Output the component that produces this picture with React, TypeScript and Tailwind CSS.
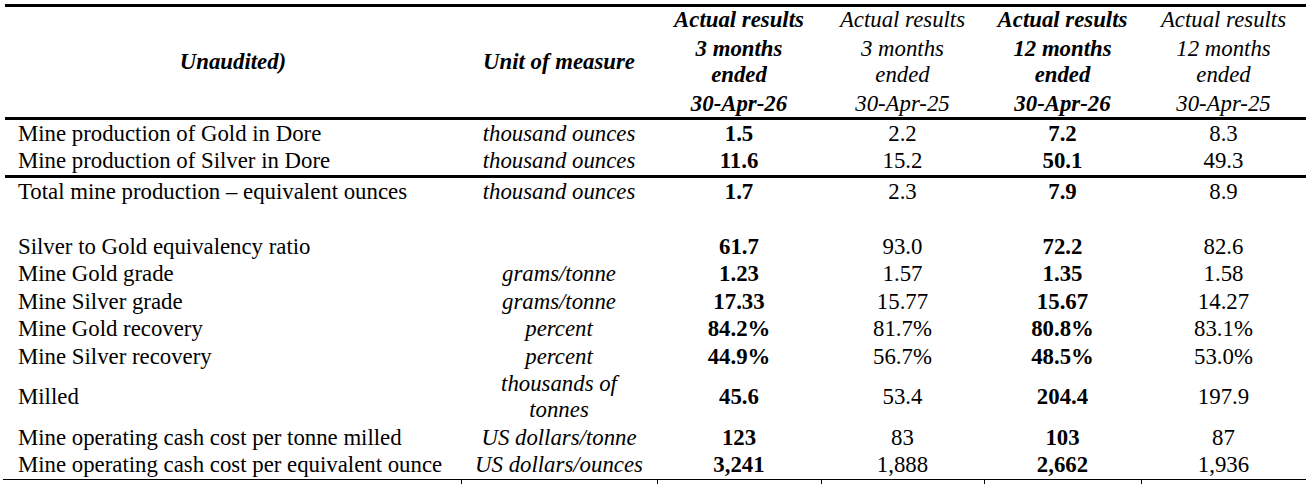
import React from "react";

type Row = { label: string; unit?: React.ReactNode; v: string[]; tall?: boolean };

const groupA: Row[] = [
  { label: "Mine production of Gold in Dore", unit: "thousand ounces", v: ["1.5", "2.2", "7.2", "8.3"] },
  { label: "Mine production of Silver in Dore", unit: "thousand ounces", v: ["11.6", "15.2", "50.1", "49.3"] },
];

const groupB: Row[] = [
  { label: "Total mine production \u2013 equivalent ounces", unit: "thousand ounces", v: ["1.7", "2.3", "7.9", "8.9"] },
  { label: "", unit: "", v: ["", "", "", ""] },
  { label: "Silver to Gold equivalency ratio", unit: "", v: ["61.7", "93.0", "72.2", "82.6"] },
  { label: "Mine Gold grade", unit: "grams/tonne", v: ["1.23", "1.57", "1.35", "1.58"] },
  { label: "Mine Silver grade", unit: "grams/tonne", v: ["17.33", "15.77", "15.67", "14.27"] },
  { label: "Mine Gold recovery", unit: "percent", v: ["84.2%", "81.7%", "80.8%", "83.1%"] },
  { label: "Mine Silver recovery", unit: "percent", v: ["44.9%", "56.7%", "48.5%", "53.0%"] },
  {
    label: "Milled",
    unit: (
      <>
        <div>thousands of</div>
        <div>tonnes</div>
      </>
    ),
    v: ["45.6", "53.4", "204.4", "197.9"],
    tall: true,
  },
  { label: "Mine operating cash cost per tonne milled", unit: "US dollars/tonne", v: ["123", "83", "103", "87"] },
  { label: "Mine operating cash cost per equivalent ounce", unit: "US dollars/ounces", v: ["3,241", "1,888", "2,662", "1,936"] },
];

function DataRow({ r }: { r: Row }) {
  const h = r.tall ? "h-[53.5px]" : "h-[27.5px]";
  return (
    <>
      <div className={`${h} flex items-center pl-[13px] whitespace-nowrap`}>{r.label}</div>
      <div className={`${h} flex flex-col items-center justify-center italic text-center whitespace-nowrap`}>{r.unit}</div>
      {r.v.map((x, i) => (
        <div
          key={i}
          className={`${h} flex items-center justify-center whitespace-nowrap ${i % 2 === 0 ? "font-bold" : ""}`}
        >
          {x}
        </div>
      ))}
    </>
  );
}

function HeadCol({ bold, period, date }: { bold: boolean; period: string; date: string }) {
  return (
    <div className={`flex flex-col items-center text-center italic whitespace-nowrap ${bold ? "font-bold" : ""}`}>
      <div>Actual results</div>
      <div className="mt-[3px]">{period}</div>
      <div>ended</div>
      <div className="mt-[3px]">{date}</div>
    </div>
  );
}

export default function App() {
  return (
    <div className="w-[1314px] h-[489px] bg-white text-black overflow-hidden font-['Liberation_Serif','Times_New_Roman',serif] text-[22.8px] leading-[26px]">
      <div className="ml-[5px] mt-[4px] w-[1301px] grid grid-cols-[456px_196px_164px_163px_157px_165px]">
        <div className="col-span-6 h-[3px] bg-black" />
        {/* header */}
        <div className="h-[110px] flex items-center justify-center font-bold italic">Unaudited)</div>
        <div className="h-[110px] flex items-center justify-center font-bold italic whitespace-nowrap">Unit of measure</div>
        <HeadCol bold period="3 months" date="30-Apr-26" />
        <HeadCol bold={false} period="3 months" date="30-Apr-25" />
        <HeadCol bold period="12 months" date="30-Apr-26" />
        <HeadCol bold={false} period="12 months" date="30-Apr-25" />
        <div className="col-span-6 h-[3px] bg-black" />
        {groupA.map((r, i) => (
          <DataRow key={"a" + i} r={r} />
        ))}
        <div className="col-span-6 h-[3px] bg-black" />
        {groupB.map((r, i) => (
          <DataRow key={"b" + i} r={r} />
        ))}
        <div className="col-span-6 h-px bg-black -ml-[2px]" />
        <div className="h-[4px]" />
        <div className="h-[4px] border-l border-black" />
        <div className="h-[4px] border-l border-black" />
        <div className="h-[4px] border-l border-black" />
        <div className="h-[4px] border-l border-black" />
        <div className="h-[4px] border-l border-black" />
      </div>
    </div>
  );
}
